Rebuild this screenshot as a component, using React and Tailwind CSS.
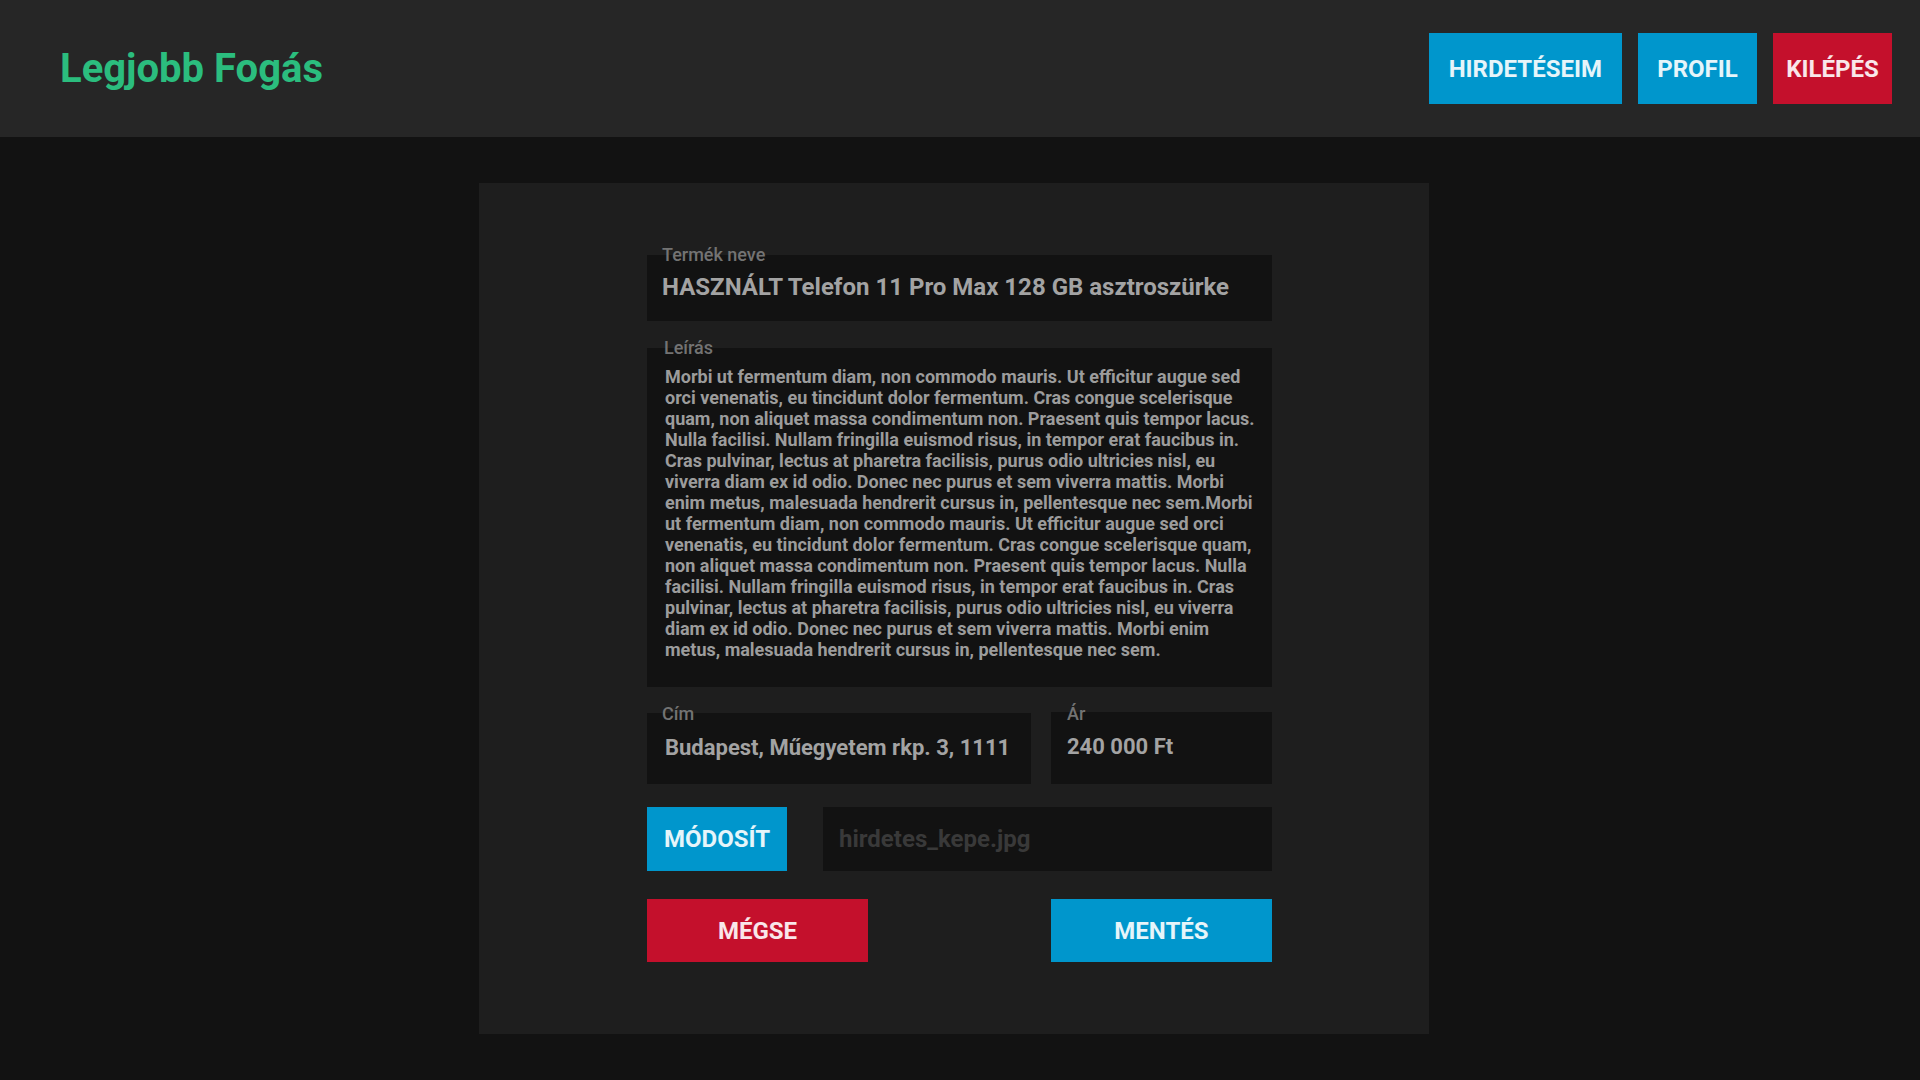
import React from "react";

const leirasLines = [
    "Morbi ut fermentum diam, non commodo mauris. Ut efficitur augue sed",
    "orci venenatis, eu tincidunt dolor fermentum. Cras congue scelerisque",
    "quam, non aliquet massa condimentum non. Praesent quis tempor lacus.",
    "Nulla facilisi. Nullam fringilla euismod risus, in tempor erat faucibus in.",
    "Cras pulvinar, lectus at pharetra facilisis, purus odio ultricies nisl, eu",
    "viverra diam ex id odio. Donec nec purus et sem viverra mattis. Morbi",
    "enim metus, malesuada hendrerit cursus in, pellentesque nec sem.Morbi",
    "ut fermentum diam, non commodo mauris. Ut efficitur augue sed orci",
    "venenatis, eu tincidunt dolor fermentum. Cras congue scelerisque quam,",
    "non aliquet massa condimentum non. Praesent quis tempor lacus. Nulla",
    "facilisi. Nullam fringilla euismod risus, in tempor erat faucibus in. Cras",
    "pulvinar, lectus at pharetra facilisis, purus odio ultricies nisl, eu viverra",
    "diam ex id odio. Donec nec purus et sem viverra mattis. Morbi enim",
    "metus, malesuada hendrerit cursus in, pellentesque nec sem.",
];

function FieldLabel({ children, className }) {
    return (
        <span className={`absolute text-[18px] leading-none font-medium text-[#737373] ${className}`}>
            {children}
        </span>
    );
}

export default function App() {
    return (
        <div className="min-h-screen bg-[#121212] font-['Roboto',sans-serif]">
            <header className="h-[137px] bg-[#262626] flex items-center justify-between pl-[60px] pr-[28px]">
                <h1 className="text-[40px] font-bold text-[#2bbd7e] leading-none">Legjobb Fogás</h1>
                <nav className="flex gap-4">
                    <button className="h-[71px] px-5 bg-[#0096cc] text-white/90 text-[24px] font-bold">HIRDETÉSEIM</button>
                    <button className="h-[71px] w-[119px] bg-[#0096cc] text-white/90 text-[24px] font-bold">PROFIL</button>
                    <button className="h-[71px] w-[119px] bg-[#c4102c] text-white/90 text-[24px] font-bold">KILÉPÉS</button>
                </nav>
            </header>

            <main className="py-[46px]">
                <div className="ml-[479px] w-[950px] bg-[#1e1e1e] py-[72px] pl-[168px]">
                    <div className="w-[625px] flex flex-col">
                        {/* Termék neve */}
                        <div className="relative h-[66px] bg-[#121212] flex items-center pl-[15px] pb-[3px]">
                            <FieldLabel className="left-[15px] -top-[9px]">Termék neve</FieldLabel>
                            <span className="text-[24px] font-bold text-[#a3a3a3]">
                                HASZNÁLT Telefon 11 Pro Max 128 GB asztroszürke
                            </span>
                        </div>

                        {/* Leírás */}
                        <div className="relative mt-[27px] h-[339px] bg-[#121212] pl-[18px] pt-[18px]">
                            <FieldLabel className="left-[17px] -top-[9px]">Leírás</FieldLabel>
                            <p className="text-[18px] leading-[21px] font-bold text-[#9c9c9c]">
                                {leirasLines.map((l, i) => (
                                    <span key={i} className="block whitespace-nowrap">{l}</span>
                                ))}
                            </p>
                        </div>

                        {/* Cím + Ár */}
                        <div className="mt-[26px] flex gap-5">
                            <div className="relative w-[384px] h-[71px] bg-[#121212] flex items-center pl-[18px] pb-[3px]">
                                <FieldLabel className="left-[15px] -top-[8px]">Cím</FieldLabel>
                                <span className="text-[22px] font-bold text-[#a3a3a3]">Budapest, Műegyetem rkp. 3, 1111</span>
                            </div>
                            <div className="relative flex-1 h-[72px] -mt-px bg-[#121212] flex items-center pl-[16px] pb-[3px]">
                                <FieldLabel className="left-[16px] -top-[7px]">Ár</FieldLabel>
                                <span className="text-[22px] font-bold text-[#a3a3a3]">240 000 Ft</span>
                            </div>
                        </div>

                        {/* Kép */}
                        <div className="mt-[23px] flex gap-9">
                            <button className="h-[64px] w-[140px] bg-[#0096cc] text-white/90 text-[24px] font-bold">MÓDOSÍT</button>
                            <div className="flex-1 h-[64px] bg-[#121212] flex items-center pl-4">
                                <span className="text-[24px] font-bold text-[#393939]">hirdetes_kepe.jpg</span>
                            </div>
                        </div>

                        {/* Gombok */}
                        <div className="mt-[28px] flex justify-between">
                            <button className="h-[63px] w-[221px] bg-[#c4102c] text-white/90 text-[24px] font-bold">MÉGSE</button>
                            <button className="h-[63px] w-[221px] bg-[#0096cc] text-white/90 text-[24px] font-bold">MENTÉS</button>
                        </div>
                    </div>
                </div>
            </main>
        </div>
    );
}
